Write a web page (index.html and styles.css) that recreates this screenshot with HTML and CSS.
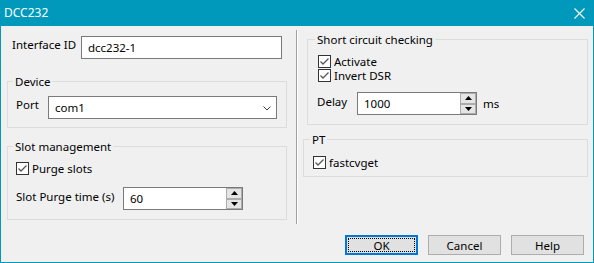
FILE: index.html
```html
<!DOCTYPE html>
<html>
<head>
<meta charset="utf-8">
<title>DCC232</title>
<link rel="stylesheet" href="styles.css">
</head>
<body>
<div class="window">
  <div class="titlebar">
    <span class="title">DCC232</span>
    <svg class="close" width="11" height="11" viewBox="0 0 11 11"><path d="M0.5 0.5 L10.5 10.5 M10.5 0.5 L0.5 10.5" stroke="#fff" stroke-width="1.1" fill="none"/></svg>
  </div>
  <div class="body">
    <div class="columns">
      <div class="col-left">
        <div class="row id-row">
          <span class="lbl lbl-id">Interface ID</span>
          <div class="textbox w-id">dcc232-1</div>
        </div>
        <fieldset class="group g-device">
          <legend>Device</legend>
          <div class="row">
            <span class="lbl lbl-port">Port</span>
            <div class="select w-port"><span>com1</span>
              <svg class="chev" width="8" height="5" viewBox="0 0 8 5"><path d="M0.5 0.5 L4 4 L7.5 0.5" stroke="#444" stroke-width="1" fill="none"/></svg>
            </div>
          </div>
        </fieldset>
        <fieldset class="group g-slot">
          <legend>Slot management</legend>
          <div class="check c-purge">
            <svg class="box" width="13" height="13" viewBox="0 0 13 13"><rect x="0.5" y="0.5" width="12" height="12" fill="#fff" stroke="#333"/><path d="M2.5 6.5 L5 9 L10.5 3.5" stroke="#555" stroke-width="1.3" fill="none"/></svg>
            <span>Purge slots</span>
          </div>
          <div class="row r-purge">
            <span class="lbl lbl-purge">Slot Purge time (s)</span>
            <div class="spin">
              <div class="spin-field">60</div>
              <div class="spin-btns">
                <span class="sb"><svg width="7" height="4" viewBox="0 0 7 4"><path d="M3.5 0 L7 4 L0 4 Z" fill="#000"/></svg></span>
                <span class="sb"><svg width="7" height="4" viewBox="0 0 7 4"><path d="M0 0 L7 0 L3.5 4 Z" fill="#000"/></svg></span>
              </div>
            </div>
          </div>
        </fieldset>
      </div>
      <div class="sep"></div>
      <div class="col-right">
        <fieldset class="group g-short">
          <legend>Short circuit checking</legend>
          <div class="check c-first">
            <svg class="box" width="13" height="13" viewBox="0 0 13 13"><rect x="0.5" y="0.5" width="12" height="12" fill="#fff" stroke="#333"/><path d="M2.5 6.5 L5 9 L10.5 3.5" stroke="#555" stroke-width="1.3" fill="none"/></svg>
            <span>Activate</span>
          </div>
          <div class="check">
            <svg class="box" width="13" height="13" viewBox="0 0 13 13"><rect x="0.5" y="0.5" width="12" height="12" fill="#fff" stroke="#333"/><path d="M2.5 6.5 L5 9 L10.5 3.5" stroke="#555" stroke-width="1.3" fill="none"/></svg>
            <span>Invert DSR</span>
          </div>
          <div class="row r-delay">
            <span class="lbl lbl-delay">Delay</span>
            <div class="spin">
              <div class="spin-field">1000</div>
              <div class="spin-btns">
                <span class="sb"><svg width="7" height="4" viewBox="0 0 7 4"><path d="M3.5 0 L7 4 L0 4 Z" fill="#000"/></svg></span>
                <span class="sb"><svg width="7" height="4" viewBox="0 0 7 4"><path d="M0 0 L7 0 L3.5 4 Z" fill="#000"/></svg></span>
              </div>
            </div>
            <span class="unit">ms</span>
          </div>
        </fieldset>
        <fieldset class="group g-pt">
          <legend>PT</legend>
          <div class="check">
            <svg class="box" width="13" height="13" viewBox="0 0 13 13"><rect x="0.5" y="0.5" width="12" height="12" fill="#fff" stroke="#333"/><path d="M2.5 6.5 L5 9 L10.5 3.5" stroke="#555" stroke-width="1.3" fill="none"/></svg>
            <span>fastcvget</span>
          </div>
        </fieldset>
      </div>
    </div>
    <div class="buttons">
      <button class="btn btn-default"><span class="focus">OK</span></button>
      <button class="btn">Cancel</button>
      <button class="btn">Help</button>
    </div>
  </div>
</div>
</body>
</html>
```
FILE: styles.css
```css
html, body {
  margin: 0;
  padding: 0;
  background: #f0f0f0;
}
body {
  font-family: "Noto Sans", "Open Sans", sans-serif;
  font-size: 11.5px;
  line-height: 15px;
  color: #000;
}
.window {
  width: 594px;
  height: 263px;
  box-sizing: border-box;
  border: 1px solid #0099bc;
  border-top: none;
  display: flex;
  flex-direction: column;
  background: #f0f0f0;
}
.titlebar {
  height: 26px;
  flex: none;
  background: #0099bc;
  display: flex;
  align-items: center;
  justify-content: space-between;
  padding: 0 9px 0 4px;
  margin: 0 -1px;
  box-sizing: border-box;
  width: 594px;
  color: #fff;
}
.title {
  font-size: 12px;
  margin-top: -1px;
}
.close {
  display: block;
  margin-top: 1px;
}
.body {
  flex: 1;
  display: flex;
  flex-direction: column;
}
.columns {
  flex: 1;
  display: flex;
  align-items: flex-start;
}
.col-left {
  width: 280px;
  margin-left: 6px;
  padding-top: 10px;
  display: flex;
  flex-direction: column;
}
.row {
  display: flex;
  align-items: flex-start;
}
.lbl {
  flex: none;
  white-space: nowrap;
}
.lbl-id { margin-left: 5px; width: 69px; margin-top: 1px; }
.lbl-port { width: 32px; margin-top: 1px; }
.lbl-purge { width: 107px; margin-top: 2px; }
.lbl-delay { width: 40px; margin-top: 2px; }
.textbox, .select, .spin-field {
  box-sizing: border-box;
  height: 23px;
  border: 1px solid #7a7a7a;
  background: #fff;
  padding: 0 0 0 6px;
  display: flex;
  align-items: center;
}
.w-id { width: 201px; }
.select {
  width: 229px;
  justify-content: space-between;
  padding-right: 5px;
}
.chev { display: block; margin-top: 1px; }
.group {
  margin: 0;
  border: 1px solid #dcdcdc;
  min-width: 0;
}
.group legend {
  padding: 0 2px;
  line-height: 15px;
}
.g-device {
  margin-top: 15px;
  padding: 7px 0 8px 8px;
}
.g-device legend { margin-left: -3px; }
.g-slot {
  margin-top: 11px;
  padding: 7px 0 9px 8px;
}
.g-slot legend { margin-left: -3px; }
.check {
  display: flex;
  align-items: flex-start;
  height: 14px;
  line-height: 14px;
}
.check .box {
  display: block;
  flex: none;
  margin-right: 3px;
}
.c-purge { height: 15px; margin-top: 1px; }
.r-purge { margin-top: 10px; }
.spin {
  display: flex;
  width: 120px;
  height: 23px;
}
.spin-field {
  flex: 1;
  border-right: none;
}
.spin-btns {
  box-sizing: border-box;
  width: 17px;
  height: 23px;
  border: 1px solid #7a7a7a;
  border-left: none;
  background: #fff;
  display: flex;
  flex-direction: column;
  justify-content: space-between;
  padding: 0;
}
.sb {
  box-sizing: border-box;
  height: 11px;
  width: 16px;
  border: 1px solid #acacac;
  background: #e5e5e5;
  display: flex;
  align-items: center;
  justify-content: center;
}
.sb svg { display: block; }
.sep {
  flex: none;
  width: 1px;
  height: 194px;
  margin-left: 9px;
  margin-top: 4px;
  background: #a0a0a0;
  border-right: 1px solid #fff;
}
.col-right {
  flex: 1;
  padding-top: 6px;
  display: flex;
  flex-direction: column;
}
.g-short {
  margin-left: 9px;
  margin-right: 5px;
  padding: 8px 0 9px 9px;
}
.g-short legend { margin-left: -2px; }
.g-short .check { margin-left: 1px; }
.r-delay { margin-top: 9px; }
.unit { margin-left: 6px; margin-top: 4px; }
.g-pt {
  margin-top: 7px;
  margin-left: 5px;
  margin-right: 5px;
  padding: 9px 0 6px 9px;
}
.g-pt legend { margin-left: -3px; }
.buttons {
  flex: none;
  display: flex;
  justify-content: flex-end;
  gap: 10px;
  padding: 0 9px 7px 0;
}
.btn {
  box-sizing: border-box;
  width: 73px;
  height: 20px;
  margin: 0;
  padding: 0;
  font: inherit;
  color: #000;
  background: #e1e1e1;
  border: 1px solid #adadad;
  border-radius: 0;
  display: flex;
  align-items: center;
  justify-content: center;
}
.btn-default {
  border: 2px solid #0078d7;
  padding: 1px;
}
.focus {
  flex: 1;
  align-self: stretch;
  display: flex;
  align-items: center;
  justify-content: center;
  outline: 1px dotted #000;
  outline-offset: -1px;
}
```
